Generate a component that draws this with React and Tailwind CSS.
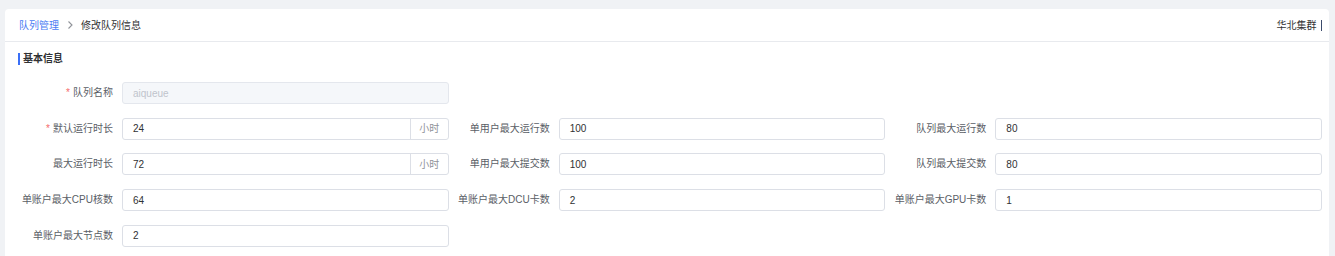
import React from "react";

const font = { fontFamily: '"Liberation Sans", "Noto Sans CJK SC", sans-serif' };

function Field({ label, value, required, disabled, append, empty }) {
  if (empty) return <div />;
  return (
    <div className="flex h-[22px] items-center">
      <div className="w-[110px] shrink-0 whitespace-nowrap pr-[9px] text-right text-[10px] leading-[22px] text-[#5a5e66]">
        {required && <span className="mr-[3px] text-[#f56c6c]">*</span>}
        {label}
      </div>
      <div
        className={
          "flex h-[22px] flex-1 items-stretch rounded-[3px] border " +
          (disabled ? "border-[#e4e7ed] bg-[#f5f7fa]" : "border-[#dcdfe6] bg-white")
        }
      >
        <div
          className={
            "flex flex-1 items-center pl-[10px] text-[10px] " +
            (disabled ? "text-[#c0c4cc]" : "text-[#303133]")
          }
        >
          {value}
        </div>
        {append && (
          <div className="flex w-[38px] items-center justify-center border-l border-[#dcdfe6] text-[10px] text-[#909399]">
            {append}
          </div>
        )}
      </div>
    </div>
  );
}

export default function App() {
  return (
    <div className="h-[256px] bg-[#f0f2f5] pl-[5px] pr-[6px] pt-[9px]" style={font}>
      <div className="h-[247px] rounded-t-[4px] bg-white">
        <div className="box-border flex h-[33px] items-center justify-between border-b border-[#e8eaee] pl-[14px] pr-[7px] text-[10px]">
          <div className="flex items-center">
            <span className="text-[#4a7cf3]">队列管理</span>
            <svg className="mx-[6px]" width="10" height="10" viewBox="0 0 10 10">
              <path d="M3.5 1.5 L7 5 L3.5 8.5" fill="none" stroke="#909399" strokeWidth="1.1" />
            </svg>
            <span className="text-[#333333]">修改队列信息</span>
          </div>
          <div className="flex items-center text-[#333333]">
            <span>华北集群</span>
            <span className="ml-[4px] h-[11px] w-[1.5px] bg-[#3b4a6b]" />
          </div>
        </div>
        <div className="px-[7px]">
          <div className="ml-[6px] mt-[11px] flex h-[12px] items-center border-l-[2px] border-[#3a6ff7] pl-[3px] text-[10px] font-bold leading-[12px] text-[#303133]">
            基本信息
          </div>
          <div className="mt-[17px] grid grid-cols-3 gap-y-[13.7px]">
            <Field label="队列名称" value="aiqueue" required disabled />
            <Field empty />
            <Field empty />
            <Field label="默认运行时长" value="24" required append="小时" />
            <Field label="单用户最大运行数" value="100" />
            <Field label="队列最大运行数" value="80" />
            <Field label="最大运行时长" value="72" append="小时" />
            <Field label="单用户最大提交数" value="100" />
            <Field label="队列最大提交数" value="80" />
            <Field label="单账户最大CPU核数" value="64" />
            <Field label="单账户最大DCU卡数" value="2" />
            <Field label="单账户最大GPU卡数" value="1" />
            <Field label="单账户最大节点数" value="2" />
          </div>
        </div>
      </div>
    </div>
  );
}
